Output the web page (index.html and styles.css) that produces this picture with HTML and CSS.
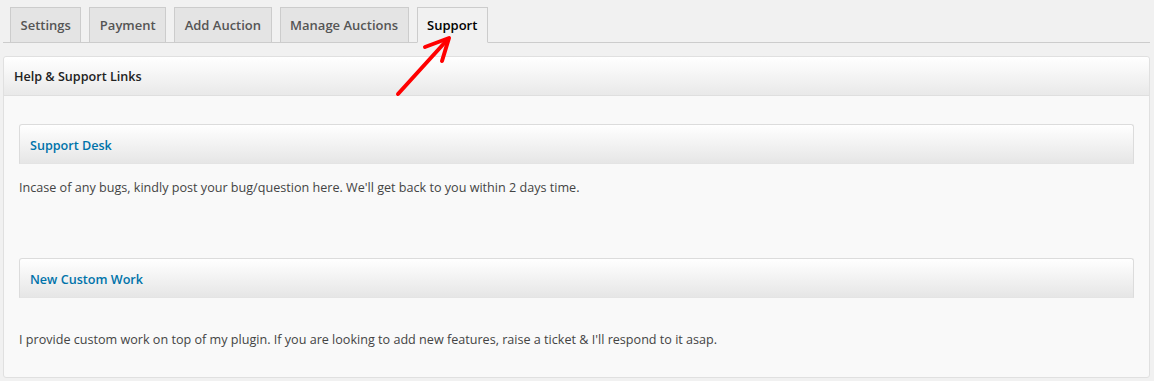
FILE: index.html
```html
<!DOCTYPE html>
<html lang="en">
<head>
  <meta charset="UTF-8" />
  <title>Auction Settings - Support</title>
  <link rel="stylesheet" href="styles.css">
</head>
<body>
  <!-- Tabs de navegacion -->
  <nav class="nav-tabs">
    <a class="nav-tab" href="#">Settings</a>
    <a class="nav-tab" href="#">Payment</a>
    <a class="nav-tab" href="#">Add Auction</a>
    <a class="nav-tab" href="#">Manage Auctions</a>
    <a class="nav-tab active" href="#">Support</a>
  </nav>

  <!-- Flecha roja apuntando a la pestana activa -->
  <svg class="pointer-arrow" width="70" height="70" viewBox="0 0 70 70">
    <path d="M 13,63 L 63,8" stroke="#ff0000" stroke-width="4" stroke-linecap="round" fill="none" />
    <path d="M 40,16 L 64,7 L 57,30" stroke="#ff0000" stroke-width="4" stroke-linecap="round" stroke-linejoin="round" fill="none" />
  </svg>

  <!-- Panel principal -->
  <div class="postbox">
    <h3 class="postbox-title">Help &amp; Support Links</h3>
    <div class="postbox-inside">

      <div class="section">
        <h4 class="section-title"><a href="#">Support Desk</a></h4>
        <p class="section-text">Incase of any bugs, kindly post your bug/question here. We'll get back to you within 2 days time.</p>
      </div>

      <div class="section">
        <h4 class="section-title"><a href="#">New Custom Work</a></h4>
        <p class="section-text spaced">I provide custom work on top of my plugin. If you are looking to add new features, raise a ticket &amp; I'll respond to it asap.</p>
      </div>

    </div>
  </div>
</body>
</html>
```

FILE: styles.css
```css
/* Reinicio basico */
* {
  margin: 0;
  padding: 0;
  box-sizing: border-box;
}
html, body {
  width: 100%;
  height: 100%;
  overflow: hidden;
  background: #f1f1f1;
  font-family: "Open Sans", "Noto Sans", sans-serif;
  font-size: 12.6px;
  color: #444;
}
body {
  position: relative;
  padding: 7px 4px 0 3px;
}

/* Pestanas */
.nav-tabs {
  display: flex;
  gap: 8px;
  padding-left: 7px;
  border-bottom: 1px solid #ccc;
}
.nav-tab {
  display: block;
  height: 36px;
  line-height: 35px;
  padding: 0 9.5px;
  margin-bottom: -1px;
  border: 1px solid #ccc;
  background: #e4e4e4;
  color: #555;
  font-size: 13px;
  font-weight: 600;
  text-decoration: none;
}
.nav-tab.active {
  background: #f1f1f1;
  color: #000;
  border-bottom-color: #f1f1f1;
}

/* Flecha roja */
.pointer-arrow {
  position: absolute;
  left: 385px;
  top: 31px;
  z-index: 5;
}

/* Caja principal */
.postbox {
  margin-top: 13px;
  border: 1px solid #e0e0e0;
  border-radius: 3px;
  background: #f9f9f9;
  height: 322px;
}
.postbox-title {
  height: 39px;
  line-height: 40px;
  padding-left: 10px;
  font-size: 12.6px;
  font-weight: 600;
  color: #222;
  background: linear-gradient(to bottom, #ffffff, #e9e9e9);
  border-bottom: 1px solid #dfdfdf;
  border-radius: 3px 3px 0 0;
}
.postbox-inside {
  padding: 28px 15px 0 15px;
}

/* Secciones */
.section-title {
  height: 40px;
  line-height: 40px;
  padding: 1px 0 0 10px;
  font-size: 12.6px;
  font-weight: 600;
  background: linear-gradient(to bottom, #ffffff, #e6e6e6);
  border: 1px solid #dcdcdc;
  border-bottom-color: #e4e4e4;
  border-radius: 3px 3px 0 0;
}
.section-title a {
  color: #0073aa;
  text-decoration: none;
}
.section-text {
  margin-top: 15px;
  margin-bottom: 61px;
  line-height: 18px;
  color: #444;
}
.section-text.spaced {
  margin-top: 33px;
  margin-bottom: 0;
}
```
